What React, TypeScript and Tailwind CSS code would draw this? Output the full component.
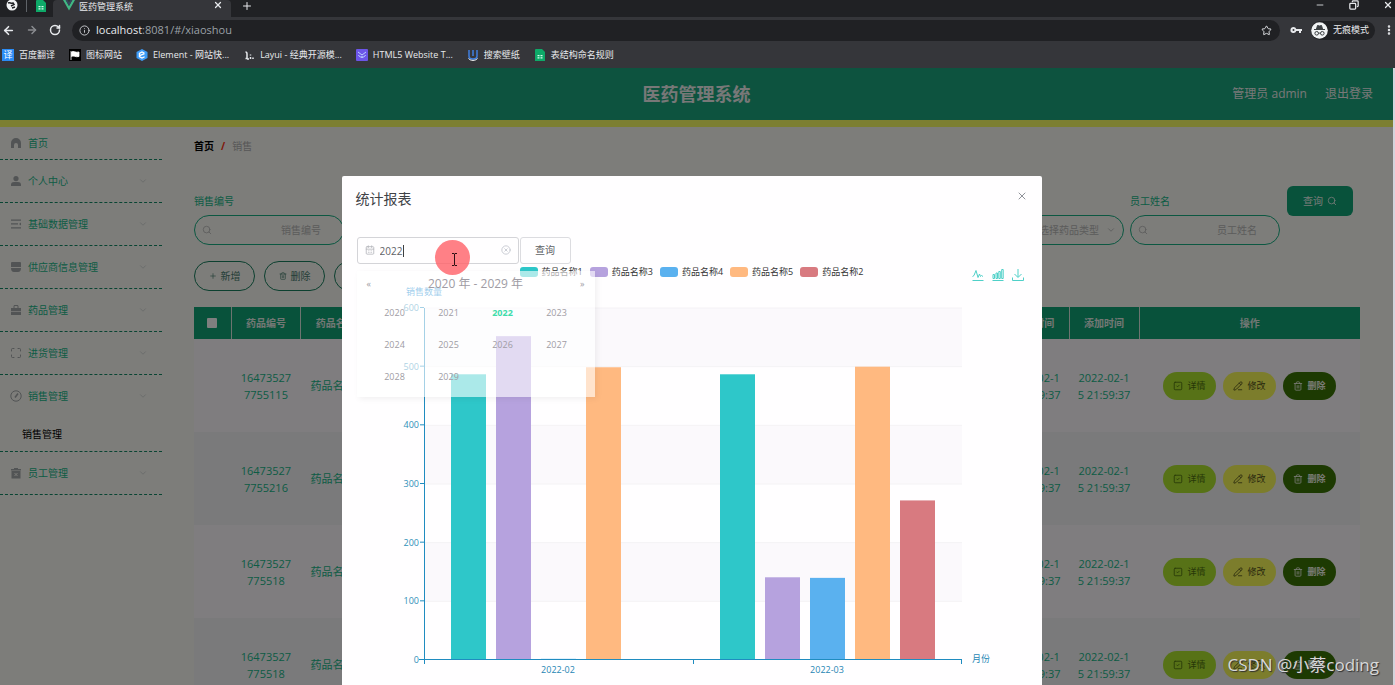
import type { ReactNode } from "react";
import {
  ArrowLeft,
  ArrowRight,
  RotateCw,
  Info,
  Star,
  X,
  Plus,
  Minus,
  Copy,
  Search,
  Trash2,
  PencilLine,
  CalendarDays,
  CircleX,
  ChevronDown,
  MoreVertical,
  Maximize,
  SquareCheck,
} from "lucide-react";

const menu = [
  { label: "首页", icon: "home" },
  { label: "个人中心", icon: "user" },
  { label: "基础数据管理", icon: "list" },
  { label: "供应商信息管理", icon: "cup" },
  { label: "药品管理", icon: "bag" },
  { label: "进货管理", icon: "full" },
  { label: "销售管理", icon: "gauge" },
  { label: "员工管理", icon: "box" },
];

const fields = ["销售编号", "药品编号", "药品名称", "客户姓名", "销售日期"];

const columns = [
  "药品编号",
  "药品名称",
  "药品类型",
  "规格",
  "单位",
  "单价",
  "销售数量",
  "总价",
  "客户姓名",
  "员工账号",
  "员工姓名",
  "销售时间",
  "添加时间",
];

const rows = [
  { id: "164735277755115", name: "药品名称5" },
  { id: "164735277755216", name: "药品名称5" },
  { id: "16473527775518", name: "药品名称4" },
  { id: "16473527775518", name: "药品名称1" },
];

const series = [
  { name: "药品名称1", color: "#2ec7c9", bg: "bg-[#2ec7c9]", data: [487, 487] },
  { name: "药品名称3", color: "#b6a2de", bg: "bg-[#b6a2de]", data: [552, 141] },
  { name: "药品名称4", color: "#5ab1ef", bg: "bg-[#5ab1ef]", data: [2, 140] },
  { name: "药品名称5", color: "#ffb980", bg: "bg-[#ffb980]", data: [499, 500] },
  { name: "药品名称2", color: "#d87a80", bg: "bg-[#d87a80]", data: [0, 272] },
];

const years = [2020, 2021, 2022, 2023, 2024, 2025, 2026, 2027, 2028, 2029];

const SheetIcon = () => (
  <svg viewBox="0 0 12 12" className="size-3 shrink-0">
    <path d="M2 0h6l3 3v9H1V1a1 1 0 0 1 1-1z" fill="#0ea968" />
    <path d="M3.5 6h2v1.3h-2zM6.5 6h2v1.3h-2zM3.5 8.3h2v1.3h-2zM6.5 8.3h2v1.3h-2z" fill="#d7ffee" />
  </svg>
);

const bookmarks: { label: string; icon: ReactNode }[] = [
  {
    label: "百度翻译",
    icon: (
      <span className="size-3 shrink-0 bg-[#2b8cf5] text-center text-[9px] leading-3 text-white">译</span>
    ),
  },
  {
    label: "图标网站",
    icon: (
      <svg viewBox="0 0 12 12" className="size-3 shrink-0">
        <rect width="12" height="12" fill="#000" />
        <path d="M2 2v9M2.5 3c2-1.500 3.500 1 7.500 0v4.500c-4 1-5.500-1.500-7.500 0z" fill="#fff" stroke="#fff" strokeWidth=".8" />
      </svg>
    ),
  },
  {
    label: "Element - 网站快...",
    icon: (
      <svg viewBox="0 0 12 12" className="size-3 shrink-0">
        <path d="M6 0l5.500 3v6L6 12 .5 9V3z" fill="#3d9bf7" />
        <path d="M8.500 4.200L6 2.900 3.400 4.400v3.200L6 9.100l2.600-1.400M3.600 6.600l4.900-2" stroke="#fff" strokeWidth="1.200" fill="none" />
      </svg>
    ),
  },
  {
    label: "Layui - 经典开源模...",
    icon: (
      <svg viewBox="0 0 12 12" className="size-3 shrink-0">
        <path d="M2.500 3c1 0 1.500 1 1.500 2v4.500H2.500M7.500 5.500v1M7.500 8v2M10 8.500v1.500M4 10h2" stroke="#e8eaed" strokeWidth="1.500" fill="none" />
      </svg>
    ),
  },
  {
    label: "HTML5 Website T...",
    icon: (
      <svg viewBox="0 0 12 12" className="size-3 shrink-0">
        <rect width="12" height="12" rx="1" fill="#6c55e8" />
        <path d="M2 3l4 3 4-3M2.500 6c1 3 6 3 7 0M5 8h2" stroke="#bcd2ff" strokeWidth="1" fill="none" />
      </svg>
    ),
  },
  {
    label: "搜索壁纸",
    icon: (
      <svg viewBox="0 0 12 12" className="size-3 shrink-0">
        <path d="M2 1v6c0 4 8 4 8 0V1M6 1v6" stroke="#3f7fe0" strokeWidth="1.500" fill="none" />
        <path d="M1.500 9.500c2 2.500 7 2.500 9 0" stroke="#fff" strokeWidth="1" fill="none" />
      </svg>
    ),
  },
  { label: "表结构命名规则", icon: <SheetIcon /> },
];

const MenuIcon = ({ name }: { name: string }) => {
  if (name === "full") return <Maximize className="size-3 text-[#a4a8aa]" strokeWidth={2} />;
  return (
    <svg viewBox="0 0 12 12" className="size-3" fill="#a4a8aa">
      {name === "home" && <path d="M6 1a5 5 0 0 1 5 5v5H8V8a2 2 0 0 0-4 0v3H1V6a5 5 0 0 1 5-5z" />}
      {name === "user" && <path d="M6 1a2.600 2.600 0 1 1 0 5.200A2.600 2.600 0 0 1 6 1zM1 11V9.500C1 7.800 2.500 7 4 7h4c1.500 0 3 .8 3 2.500V11z" />}
      {name === "list" && <path d="M1 1.500h10v1.300H1zM1 5.300h7v1.300H1zM1 9.200h10v1.300H1zM11 4.500v3L9 6z" />}
      {name === "cup" && <path d="M2 1h8a1 1 0 0 1 1 1v4H1V2a1 1 0 0 1 1-1zM1 7h10c0 2.500-1 4-3 4H4c-2 0-3-1.500-3-4z" />}
      {name === "bag" && <path d="M3.500 4V2.500C3.500 1.700 4 1 5 1h2c1 0 1.500.7 1.500 1.500V4H11v3H1V4zm1 0h3V2.500c0-.5-.3-.5-.5-.5H5c-.3 0-.5 0-.5.5zM1 7.800h10V11H1z" />}
      {name === "gauge" && (
        <g fill="none" stroke="#a4a8aa">
          <circle cx="6" cy="6" r="5.200" />
          <path d="M8 3.500L5 7.500" strokeWidth="1.500" />
        </g>
      )}
      {name === "box" && (
        <g>
          <path d="M1 2h3V1h4v1h3v1.500H1zM1.500 4h9v7.500h-9z" />
          <path d="M4.500 6l3 3M7.500 6l-3 3" stroke="#fafaf4" strokeWidth="1" />
        </g>
      )}
    </svg>
  );
};

const BrowserBar = () => (
  <div className="h-[68px] shrink-0 bg-[#35363a] text-[9px] text-[#e8eaed]">
    <div className="flex h-[17px] items-start justify-between bg-[#202124]">
      <div className="flex h-full">
        <div className="flex w-[53px] items-start gap-2 pl-[6px]">
          <svg viewBox="0 0 12 12" className="size-3 shrink-0">
            <circle cx="6" cy="5" r="5.500" fill="#f1f3f4" />
            <path d="M2 3c2-1 3 1 5 0l1 1.500-3 1.500M6 8l3-1" stroke="#202124" strokeWidth="1.500" fill="none" />
          </svg>
          <span className="h-3 w-px bg-[#5f6368]" />
          <SheetIcon />
        </div>
        <div className="flex h-full w-[178px] items-start rounded-t bg-[#35363a] pl-[10px]">
          <svg viewBox="0 0 12 12" className="mr-1 size-3">
            <path d="M0 0h2.600L6 6l3.400-6H12L6 10.500z" fill="#41b883" />
            <path d="M2.600 0h2L6 2.500 7.400 0h2L6 6z" fill="#35495e" />
          </svg>
          <span className="flex-1 leading-[14px]">医药管理系统</span>
          <button aria-label="关闭标签页" className="pr-2">
            <X className="size-[10px]" strokeWidth={3} />
          </button>
        </div>
        <button aria-label="新标签页" className="self-start pl-[10px]">
          <Plus className="size-3" strokeWidth={2} />
        </button>
      </div>
      <div className="flex gap-6 pr-[2px]">
        <Minus className="size-[10px]" />
        <Copy className="size-[10px] -scale-x-100" strokeWidth={3} />
        <X className="size-[10px]" strokeWidth={3} />
      </div>
    </div>
    <div className="flex h-[26px] items-center">
      <div className="flex w-[72px] items-center gap-[11px] pl-[2px]">
        <ArrowLeft className="size-[13px]" strokeWidth={3} />
        <ArrowRight className="size-3 text-[#8a8c90]" strokeWidth={3} />
        <RotateCw className="size-3" strokeWidth={3} />
      </div>
      <div className="flex h-[21px] flex-1 items-center justify-between rounded-full bg-[#202124] pl-[7px] pr-2 text-[11px] text-[#9aa0a6]">
        <span className="flex items-center gap-[6px]">
          <Info className="size-[11px] text-[#d0d2d6]" />
          <span>
            <span className="text-[#e8eaed]">localhost</span>:8081/#/xiaoshou
          </span>
        </span>
        <Star className="size-[11px] text-[#e8eaed]" />
      </div>
      <svg viewBox="0 0 12 8" className="ml-[10px] h-2 w-3">
        <path d="M3.500 1a3 3 0 0 1 2.800 2H12v2h-1v2H9V5H6.300A3 3 0 1 1 3.500 1zm0 2a1 1 0 1 0 0 2 1 1 0 0 0 0-2z" fill="#e8eaed" />
      </svg>
      <div className="ml-[9px] flex h-[19px] items-center gap-[5px] rounded-full bg-[#202124] pr-[6px]">
        <svg viewBox="0 0 17 17" className="size-[17px]">
          <circle cx="8.500" cy="8.500" r="8.300" fill="#f1f3f4" />
          <path d="M3 7.500h11M5.500 7l1-3.500 2 .5 2-.5 1 3.500z" stroke="#3c4043" fill="#3c4043" />
          <path d="M7.500 11.500c.6-.5 1.400-.5 2 0" stroke="#3c4043" fill="none" />
          <circle cx="5.700" cy="11.300" r="1.800" stroke="#3c4043" fill="none" />
          <circle cx="11.300" cy="11.300" r="1.800" stroke="#3c4043" fill="none" />
        </svg>
        <span>无痕模式</span>
      </div>
      <MoreVertical className="ml-2 size-3" strokeWidth={3} />
    </div>
    <div className="flex h-[23px] items-center gap-[14px] pl-[2px]">
      {bookmarks.map((b) => (
        <a key={b.label} href="#" className="flex items-center gap-[5px] whitespace-nowrap">
          {b.icon}
          {b.label}
        </a>
      ))}
    </div>
  </div>
);

const Sidebar = () => (
  <aside className="w-[162px] shrink-0 text-[10px] text-[#18b88a]">
    {menu.map((item, i) => (
      <div key={item.label} className="border-b border-dashed border-[#128a66]">
        <a
          href="#"
          className={
            i === 0
              ? "flex h-8 items-center gap-[6px] pl-[10px]"
              : "flex h-[42px] items-center gap-[6px] pl-[10px]"
          }
        >
          <MenuIcon name={item.icon} />
          <span className="flex-1">{item.label}</span>
          {i > 0 && <ChevronDown className="mr-[14px] size-[10px] text-[#d0d4d4]" strokeWidth={2} />}
        </a>
        {item.icon === "gauge" && (
          <a href="#" className="flex h-[34px] items-center pl-[22px] text-black">
            销售管理
          </a>
        )}
      </div>
    ))}
  </aside>
);

const inputClass =
  "h-[30px] w-full rounded-full border border-[#18b084] bg-transparent pl-6 pr-[22px] text-right text-[10px] placeholder:text-[#b8b8b8]";

const SearchField = ({ label }: { label: string }) => (
  <label className="relative flex w-[150px] shrink-0 flex-col">
    <span className="mb-[6px] leading-4">{label}</span>
    <input className={inputClass} placeholder={label} />
    <Search className="absolute bottom-[10px] left-2 size-[10px] text-[#b8b8b8]" />
  </label>
);

const toolButton =
  "flex h-[30px] w-[61px] items-center justify-center gap-1 rounded-full border border-[#18805f] text-[#4a8070]";
const rowButton = "flex h-7 w-[53px] items-center justify-center gap-1 rounded-full";

const SalesPage = () => (
  <main className="min-w-0 flex-1 pl-8 pr-[33px] pt-[11px] text-[10px] text-[#18b88a]">
    <nav className="flex h-4 items-center gap-[7px]">
      <a href="#" className="font-bold text-black">
        首页
      </a>
      <span className="font-bold text-[#ff3010]">/</span>
      <span className="text-[#b0b0b0]">销售</span>
    </nav>
    <form className="mt-8 flex items-start gap-[7px]">
      <div className="mt-[7px] flex gap-[6px]">
        {fields.map((f) => (
          <SearchField key={f} label={f} />
        ))}
        <label className="relative flex w-[150px] shrink-0 flex-col">
          <span className="mb-[6px] leading-4">药品类型</span>
          <select className="h-[30px] w-full appearance-none rounded-full border border-[#18b084] bg-transparent pr-6 text-right text-[#b8b8b8] [text-align-last:right]">
            <option>选择药品类型</option>
          </select>
          <ChevronDown className="absolute bottom-[10px] right-2 size-[10px] text-[#b8b8b8]" />
        </label>
        <SearchField label="员工姓名" />
      </div>
      <button
        type="button"
        className="flex h-[30px] w-[66px] items-center justify-center gap-1 rounded-md bg-[#10a476] text-[#e8f4ee]"
      >
        查询
        <Search className="size-[10px]" />
      </button>
    </form>
    <div className="mt-4 flex gap-[9px]">
      <button className={toolButton}>
        <Plus className="size-2" />
        新增
      </button>
      <button className={toolButton}>
        <Trash2 className="size-2" />
        删除
      </button>
      <button className={toolButton}>报表</button>
    </div>
    <table className="mt-4 w-full table-fixed border-collapse text-center">
      <thead>
        <tr className="h-8 bg-[#10a476] text-[#e4efe9]">
          <th className="w-[37px] border-r border-[#d8e8e0]">
            <input
              type="checkbox"
              aria-label="全选"
              className="mx-auto block size-[10px] appearance-none rounded-[1px] bg-white"
            />
          </th>
          {columns.map((c) => (
            <th key={c} className="border-r border-[#d8e8e0] font-bold">
              {c}
            </th>
          ))}
          <th className="w-[221px] font-bold">操作</th>
        </tr>
      </thead>
      <tbody className="text-[11px] leading-[17px]">
        {rows.map((r, i) => (
          <tr key={i} className="h-[93px] odd:bg-[#fefafe] even:bg-[#f4f4f6]">
            <td>
              <input
                type="checkbox"
                aria-label="选择"
                className="mx-auto block size-[10px] appearance-none rounded-[1px]"
              />
            </td>
            <td className="px-[7px] break-all">{r.id}</td>
            <td className="px-[7px]">{r.name}</td>
            <td colSpan={9}></td>
            <td className="px-[7px] break-all">2022-02-15 21:59:37</td>
            <td className="px-[7px] break-all">2022-02-15 21:59:37</td>
            <td>
              <div className="flex justify-center gap-[7px] text-[9px]">
                <button className={`${rowButton} bg-[#aee42e] text-[#4e7010]`}>
                  <SquareCheck className="size-[10px]" />
                  详情
                </button>
                <button className={`${rowButton} bg-[#f8fa58] text-[#50501c]`}>
                  <PencilLine className="size-[10px]" />
                  修改
                </button>
                <button className={`${rowButton} bg-[#3a7404] font-bold text-[#f0f4e8]`}>
                  <Trash2 className="size-[10px]" />
                  删除
                </button>
              </div>
            </td>
          </tr>
        ))}
      </tbody>
    </table>
  </main>
);

// plot area of the chart
const left = 82;
const top = 22;
const bottom = 374;
const groupWidth = 269;

const scaleY = (v: number) => bottom - (v * (bottom - top)) / 600;

const BarChart = () => (
  <svg viewBox="0 0 700 400" className="block w-full text-[9px]">
    {[500, 300, 100].map((v) => (
      <rect key={v} x={left} y={scaleY(v + 100)} width={groupWidth * 2} height={scaleY(0) - scaleY(100)} fill="#fbf9fc" />
    ))}
    {[100, 200, 300, 400, 500, 600].map((v) => (
      <path key={v} d={`M${left} ${scaleY(v)}h${groupWidth * 2}`} stroke="#f4f2f5" />
    ))}
    {series.map((s, i) =>
      s.data.map((v, g) => (
        <rect
          key={`${i}-${g}`}
          x={left + 27 + g * groupWidth + i * 45}
          y={scaleY(v)}
          width="35"
          height={bottom - scaleY(v)}
          fill={s.color}
        />
      ))
    )}
    <path
      d={`M${left + 0.5} ${top}V${bottom + 4}M${left - 5} ${bottom - 0.5}H${left + groupWidth * 2}M${left + groupWidth + 0.5} ${bottom}v4M${left + groupWidth * 2 - 0.5} ${bottom}v4`}
      stroke="#1f8cc0"
      fill="none"
    />
    {[0, 100, 200, 300, 400, 500, 600].map((v) => (
      <g key={v}>
        <path d={`M${left - 4} ${scaleY(v) - 0.5}h4`} stroke="#1f8cc0" />
        <text x={left - 5} y={scaleY(v) + 3} textAnchor="end" fill="#3090b8">
          {v}
        </text>
      </g>
    ))}
    <g fill="#1f86b4" textAnchor="middle">
      <text x={left} y="9" fill="#0a86d0">
        销售数量
      </text>
      <text x="216" y="387">
        2022-02
      </text>
      <text x="485" y="387">
        2022-03
      </text>
      <text x="639" y="376">
        月份
      </text>
    </g>
  </svg>
);

const YearPicker = () => (
  <div className="absolute left-0 top-[34px] z-10 h-[126px] w-[238px] bg-white/60 pt-1 text-[9px] text-[#a09ca4] shadow-[2px_2px_6px_rgba(0,0,0,0.06)]">
    <div className="flex h-[18px] items-center justify-between px-[10px]">
      <button type="button" aria-label="前十年">«</button>
      <span className="text-[12px]">2020 年 - 2029 年</span>
      <button type="button" aria-label="后十年">»</button>
    </div>
    <div className="grid grid-cols-4 px-[11px] pt-1">
      {years.map((y) => (
        <button
          type="button"
          key={y}
          className={y === 2022 ? "h-8 font-bold text-[#3edcaa]" : "h-8"}
        >
          {y}
        </button>
      ))}
    </div>
  </div>
);

const Toolbox = () => (
  <div className="flex justify-end gap-2 pr-[18px] text-[#4fd0c8]">
    <button type="button" aria-label="折线图">
      <svg viewBox="0 0 12 12" className="size-3" fill="none" stroke="currentColor">
        <path d="M.5 7.500l1.500-1 2-5 2 7 1.500-3.500 1 2.500 1-1 1.500 1M.5 11.500h11" />
      </svg>
    </button>
    <button type="button" aria-label="柱状图">
      <svg viewBox="0 0 12 12" className="size-3" fill="none" stroke="currentColor">
        <path d="M1 5.500h1.500v4H1zM4 4h1.500v5.500H4zM6.800 2.500h1.500v7H6.800zM9.700.5h1.500v9H9.700zM.5 11.500h11" />
      </svg>
    </button>
    <button type="button" aria-label="下载">
      <svg viewBox="0 0 12 12" className="size-3" fill="none" stroke="currentColor">
        <path d="M6 0v8M2.500 5L6 8.500 9.500 5M.5 8.500v3h11v-3" />
      </svg>
    </button>
  </div>
);

const ReportDialog = () => (
  <div className="absolute inset-0 flex items-start justify-center bg-black/50 pr-[10px] pt-[108px]">
    <section role="dialog" aria-label="统计报表" className="w-[700px] rounded-[2px] bg-[#fffeff] pb-8">
      <header className="flex h-[47px] items-start justify-between px-[14px] pt-[14px]">
        <h2 className="text-[14px] leading-[18px] text-[#404246]">统计报表</h2>
        <button aria-label="关闭">
          <X className="size-3 text-[#909399]" strokeWidth={2} />
        </button>
      </header>
      <form className="flex gap-px px-[15px] pt-[14px] text-[10px] text-[#606266]">
        <div className="relative w-[162px]">
          <input
            aria-label="年份"
            defaultValue="2022"
            className="h-[27px] w-full rounded-[3px] border border-[#d4d4d8] bg-transparent pl-[22px]"
          />
          <span className="absolute left-[46px] top-2 h-3 w-px bg-[#404040]" />
          <CalendarDays className="absolute left-2 top-2 size-[10px] text-[#b4b6bc]" />
          <CircleX className="absolute right-2 top-2 size-[10px] text-[#c0c4cc]" />
          <YearPicker />
          <span className="absolute left-[78px] top-[3px] z-20 size-[35px] rounded-full bg-[#ff6068]/80" />
          <svg viewBox="0 0 7 13" className="absolute left-[94px] top-4 z-20 h-[13px] w-[7px]">
            <path d="M1 .5h2l.5.500.5-.5h2M1 12.500h2l.5-.5.5.5h2M3.500 1v11" stroke="#301014" fill="none" />
          </svg>
        </div>
        <button type="button" className="h-[27px] w-[51px] rounded-[3px] border border-[#dcdce0]">
          查询
        </button>
      </form>
      <div className="grid h-[22px] grid-cols-[1fr_auto_1fr] items-center">
        <span />
        <ul className="flex h-4 items-center gap-[7px] self-start text-[9px] text-[#333]">
          {series.map((s) => (
            <li key={s.name} className="flex items-center gap-1">
              <span className={`h-[10px] w-[18px] rounded-[3px] ${s.bg}`} />
              {s.name}
            </li>
          ))}
        </ul>
        <Toolbox />
      </div>
      <BarChart />
    </section>
  </div>
);

const App = () => {
  return (
    <div className="relative flex h-screen flex-col overflow-hidden font-['Open_Sans','Noto_Sans_CJK_SC',sans-serif]">
      <BrowserBar />
      <div className="flex min-h-0 flex-1 bg-[#d4d4dc]">
        <div className="relative mr-[2px] flex-1 overflow-hidden bg-[#fafaf4]">
          <header className="grid h-[59px] grid-cols-3 items-center border-b-[7px] border-[#f8ff64] bg-[#1aa67e] text-[12px] text-[#f0f0f0]">
            <span />
            <h1 className="text-center text-[18px] font-bold">医药管理系统</h1>
            <div className="flex justify-end gap-[18px] pr-5">
              <span>管理员 admin</span>
              <a href="#">退出登录</a>
            </div>
          </header>
          <div className="flex">
            <Sidebar />
            <SalesPage />
          </div>
          <ReportDialog />
        </div>
      </div>
      <p className="absolute bottom-2 right-4 text-[17px] leading-6 text-[#d8d8d8] [text-shadow:1px_1px_1px_#303030]">
        CSDN @小蔡coding
      </p>
    </div>
  );
};

export default App;
